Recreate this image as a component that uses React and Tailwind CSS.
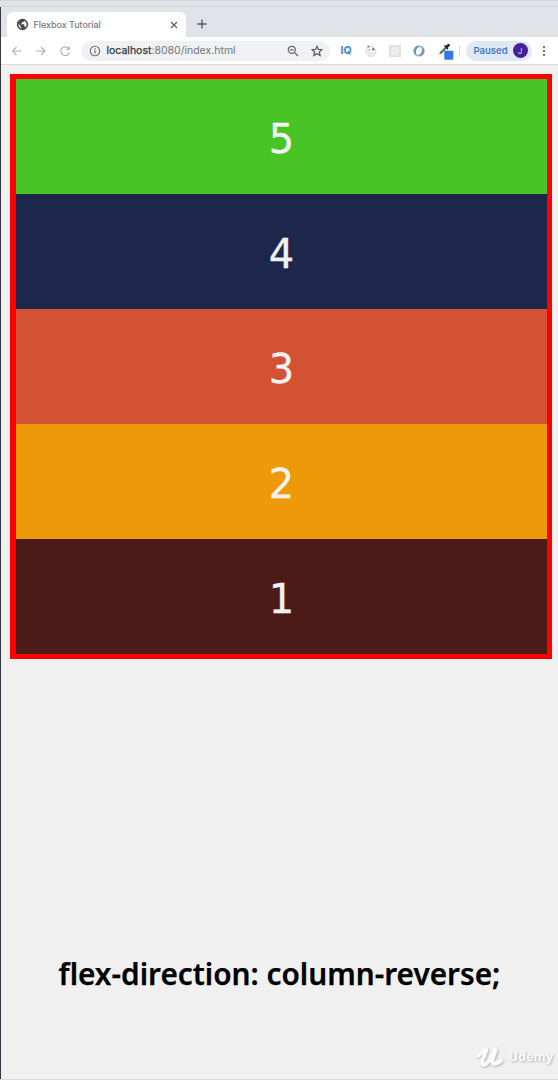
import React from "react";

const boxes = [
  { n: 1, cls: "bg-[#4c1b18]" },
  { n: 2, cls: "bg-[#ee990a]" },
  { n: 3, cls: "bg-[#d35233]" },
  { n: 4, cls: "bg-[#1d274c]" },
  { n: 5, cls: "bg-[#48c425]" },
];

function Globe() {
  return (
    <svg viewBox="0 0 24 24" className="ml-[9px] h-[13px] w-[13px] shrink-0" fill="#474b4f" stroke="#474b4f" strokeWidth="1">
      <path d="M12 2C6.480 2 2 6.480 2 12s4.480 10 10 10 10-4.480 10-10S17.520 2 12 2zm-1 17.930c-3.950-.49-7-3.850-7-7.930 0-.62.080-1.210.210-1.790L9 15v1c0 1.100.9 2 2 2v1.930zm6.900-2.540c-.26-.81-1-1.390-1.900-1.390h-1v-3c0-.55-.45-1-1-1H8v-2h2c.55 0 1-.45 1-1V7h2c1.100 0 2-.9 2-2v-.41c2.930 1.190 5 4.060 5 7.410 0 2.080-.8 3.970-2.100 5.390z" />
    </svg>
  );
}

function TabStrip() {
  return (
    <div className="flex h-[30px] items-end bg-[#e0e3e7]">
      <div className="ml-[6px] flex h-[25px] w-[179px] items-center rounded-t-[6px] bg-white">
        <Globe />
        <span className="ml-[4.500px] w-[136px] shrink-0 whitespace-nowrap text-[9px] leading-none text-[#74777b] [-webkit-text-stroke:0.150px_#74777b]">
          Flexbox Tutorial
        </span>
        <svg viewBox="0 0 8 8" className="h-[8px] w-[8px] shrink-0" stroke="#55595d" strokeWidth="1.1">
          <path d="M1 1l6 6M7 1L1 7" />
        </svg>
      </div>
      <svg viewBox="0 0 10 10" className="mb-[8px] ml-[11px] h-[10px] w-[10px]" stroke="#4f5357" strokeWidth="1.300">
        <path d="M5 .5v9M.5 5h9" />
      </svg>
    </div>
  );
}

function Toolbar() {
  return (
    <div className="flex h-[28px] items-center border-b border-[#d9dbdd] bg-white pl-[10px]">
      <svg viewBox="0 0 62 14" className="h-[14px] w-[62px] shrink-0" fill="none" stroke="#b2b4b7" strokeWidth="1.150">
        <path d="M10.500 7H1.500M5.500 3L1.500 7l4 4M25 7h9M30 3l4 4-4 4" />
        <path d="M57.500 4.500A4.300 4.300 0 1 0 58.300 8.300" />
        <path d="M58.800 2v4h-4z" fill="#b2b4b7" stroke="none" />
      </svg>
      <div className="ml-[8px] flex h-[20px] w-[249px] shrink-0 items-center rounded-full bg-[#eff1f2]">
        <svg viewBox="0 0 12 12" className="ml-[8px] h-[12px] w-[12px] shrink-0" fill="none" stroke="#6c7074" strokeWidth="1.100">
          <circle cx="6" cy="6" r="4.700" />
          <path d="M6 5.300v3.200M6 3.300v1.100" strokeWidth="1.200" />
        </svg>
        <span className="ml-[5.500px] w-[181px] shrink-0 whitespace-nowrap pt-[2px] text-[10.500px] leading-none text-[#74777b]">
          <span className="text-[#35383c] [-webkit-text-stroke:0.250px_#35383c]">localhost</span>:8080/index.html
        </span>
        <svg viewBox="0 0 12 12" className="-ml-[1px] h-[12px] w-[12px] shrink-0" fill="none" stroke="#686c70" strokeWidth="1.300">
          <circle cx="4.800" cy="4.800" r="3.500" />
          <path d="M7.500 7.500l3.500 3.500M3 4.800h3.600" />
        </svg>
        <svg viewBox="0 0 12 12" className="ml-[12px] h-[12px] w-[12px] shrink-0" fill="none" stroke="#5c6064" strokeWidth="1.250">
          <path d="M6 1.200l1.400 3.200 3.500.3-2.600 2.300.8 3.400L6 8.600l-3.100 1.800.8-3.400L1.100 4.700l3.500-.3z" />
        </svg>
      </div>
      <span className="ml-[10.500px] w-[13px] shrink-0 pt-[1px] text-[10.500px] font-bold leading-none text-[#3b8cc9]">IQ</span>
      <svg viewBox="0 0 14 14" className="ml-[10px] h-[14px] w-[14px] shrink-0">
        <circle cx="7" cy="7.500" r="5" fill="#f3f3f3" stroke="#cecece" strokeWidth=".8" />
        <circle cx="4.300" cy="2.600" r="1" fill="#777" />
        <circle cx="9.300" cy="5.300" r="1.100" fill="#555" />
        <circle cx="5.200" cy="6" r=".8" fill="#999" />
        <path d="M4.500 9.300q2.500 1.500 5 0" fill="none" stroke="#ccc" strokeWidth=".8" />
      </svg>
      <svg viewBox="0 0 12 12" className="ml-[11px] h-[12px] w-[12px] shrink-0">
        <rect x=".4" y=".4" width="11.200" height="11.200" fill="#e5e5e5" stroke="#dcdcdc" strokeWidth=".8" />
        <g fill="none" stroke="#f3f3f3" strokeWidth=".8">
          <ellipse cx="6" cy="6" rx="4.200" ry="1.600" />
          <ellipse cx="6" cy="6" rx="4.200" ry="1.600" transform="rotate(60 6 6)" />
          <ellipse cx="6" cy="6" rx="4.200" ry="1.600" transform="rotate(120 6 6)" />
        </g>
      </svg>
      <svg viewBox="0 0 14 14" className="ml-[11px] h-[14px] w-[14px] shrink-0" fill="none">
        <circle cx="7" cy="7" r="4.800" stroke="#a5bfd2" strokeWidth="2" />
        <path d="M6 1.700C.8 3 .5 9 4.500 11.500 3.500 8 4 4 7.500 2.800M8 12.300c5.200-1.300 5.500-7.300 1.500-9.800C10.500 6 10 10 6.500 11.200" fill="#7197b5" />
        <ellipse cx="7" cy="7" rx="1.400" ry="3" transform="rotate(15 7 7)" fill="#fff" />
      </svg>
      <svg viewBox="0 0 16 18" className="ml-[12px] mt-[3px] h-[18px] w-[16px] shrink-0">
        <path d="M1.200 11.300L2 9l5-5 1.600 1.600-5 5z" fill="#57715b" />
        <path d="M6 3l1-1 1 .8L9.500 1.200q1.300-.8 2 .1.800.9-.1 2L9.700 4.800l.8 1-1 1z" fill="#222" />
        <rect x="6.300" y="7.800" width="9" height="9" rx=".8" fill="#3478e5" />
      </svg>
      <div className="ml-[5px] h-[12px] w-px shrink-0 bg-[#d9dbdd]" />
      <div className="ml-[6px] flex h-[20px] w-[66px] shrink-0 items-center rounded-full bg-[#dfe9f6]">
        <span className="ml-[8px] w-[39px] shrink-0 text-[9.600px] font-medium leading-none text-[#4379c4] [-webkit-text-stroke:0.150px_#4379c4]">Paused</span>
        <span className="flex h-[15px] w-[15px] shrink-0 items-center justify-center rounded-full bg-[#472098] text-[8px] leading-none text-[#ddd4ef]">J</span>
      </div>
      <svg viewBox="0 0 4 12" className="ml-[10px] h-[12px] w-[4px] shrink-0" fill="#54575b">
        <circle cx="2" cy="2" r="1.100" />
        <circle cx="2" cy="6" r="1.100" />
        <circle cx="2" cy="10" r="1.100" />
      </svg>
    </div>
  );
}

function Watermark() {
  return (
    <div className="flex h-[28px] items-center justify-end pr-[5px] text-[#fafafa] drop-shadow-[1px_1px_1px_rgba(0,0,0,0.250)]">
      <svg viewBox="0 0 28 24" className="mr-[5px] h-[24px] w-[28px]" fill="none" stroke="#fafafa" strokeLinecap="round" strokeLinejoin="round">
        <path d="M2.500 10.500Q5 8 8.500 4Q11 3 9.800 6.500L6.500 15Q5 20.500 8.500 19.500Q14 17.500 18.500 5" strokeWidth="4" />
        <path d="M19.500 5L16.500 14.500Q15.500 19.500 19.500 18.500Q23 17.500 25 15.500" strokeWidth="4" />
      </svg>
      <span className="font-['Open_Sans',sans-serif] text-[12.500px] font-bold leading-none">Udemy</span>
    </div>
  );
}

export default function App() {
  return (
    <div className="flex h-[1080px] w-[558px] flex-col overflow-hidden bg-[#f0f0f0] font-[Inter,Roboto,sans-serif]">
      <div className="h-[7px] shrink-0 border-b border-t border-[#d2d5d9] bg-[#dfe2e6]" />
      <div className="flex min-h-0 flex-1 flex-col border-l border-[#38393d]">
        <div className="shrink-0">
          <TabStrip />
          <Toolbar />
        </div>
        <main className="ml-[9px] mt-[9px] flex h-[585px] w-[542px] shrink-0 flex-col-reverse border-[5px] border-l-[6px] border-[#ff0000]">
          {boxes.map(({ n, cls }) => (
            <div
              key={n}
              className={`flex flex-1 items-center justify-center pt-[4px] font-['DejaVu_Sans',sans-serif] text-[40px] leading-none text-[#f2f2f2] [-webkit-text-stroke:0.300px_#f2f2f2] ${cls}`}
            >
              {n}
            </div>
          ))}
        </main>
        <p className="mt-[295px] whitespace-nowrap text-center font-['Noto_Sans',sans-serif] text-[29.750px] font-semibold leading-[40px] text-black [font-variant-ligatures:none] [-webkit-text-stroke:0.250px_#000]">
          flex-direction: column-reverse;
        </p>
        <div className="mt-auto pb-[8px]">
          <Watermark />
        </div>
      </div>
      <div className="h-px shrink-0 bg-[#dcdcdc]" />
    </div>
  );
}
